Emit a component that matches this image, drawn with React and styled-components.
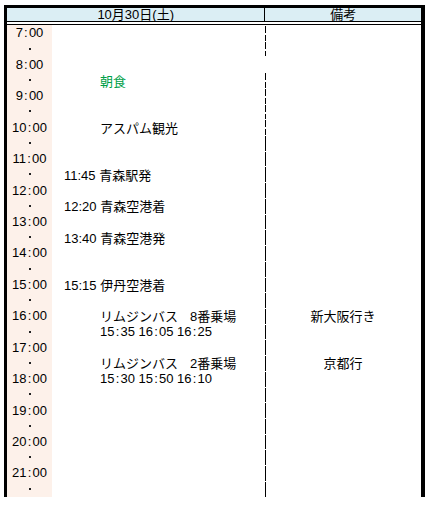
import React from "react";
import styled, { createGlobalStyle } from "styled-components";

const GlobalStyle = createGlobalStyle`
  body {
    margin: 0;
    background: #fff;
    font-family: "Liberation Sans", "Noto Sans CJK JP", sans-serif;
    color: #000;
  }
`;

const Sheet = styled.div`
  margin: 5px 0 0 4px;
  width: 421px;
  box-sizing: border-box;
  border-top: 3px solid #000;
  border-left: 3px solid #000;
  border-right: 4px solid #000;
`;

const HeaderRow = styled.div`
  display: flex;
  height: 13px;
  background: #dbeef4;
  border-bottom: 1px solid #000;
  font-size: 13px;
  line-height: 13px;
`;

const HeaderCell = styled.div`
  width: ${(p) => p.$w}px;
  text-align: center;
  border-left: ${(p) => (p.$divider ? "1px solid #000" : "none")};
  overflow: hidden;
`;

const Body = styled.div`
  margin-top: 2px;
  border-top: 1px solid #000;
`;

const Row = styled.div`
  display: flex;
  height: 15.733px;
  font-size: 13px;
`;

const TimeCell = styled.div`
  width: 45px;
  background: #fdf1ea;
  display: flex;
  align-items: center;
  justify-content: center;
`;

const Dot = styled.span`
  width: 2px;
  height: 2px;
  background: #222;
`;

const Colon = styled.span`
  margin: 0 1.2px;
`;

const EventCell = styled.div`
  width: 213px;
  display: flex;
  align-items: center;
  padding-left: ${(p) => p.$indent}px;
  box-sizing: border-box;
  white-space: nowrap;
  color: ${(p) => p.$color || "#000"};
`;

const BusName = styled.span`
  display: inline-block;
  width: 90px;
`;

const BusTime = styled.span`
  display: inline-block;
  width: 38.5px;
`;

const RemarkCell = styled.div`
  position: relative;
  flex: 1;
  display: flex;
  align-items: center;
  justify-content: center;
  &::before {
    content: "";
    position: absolute;
    left: 0;
    top: 1px;
    bottom: 0;
    width: 1px;
    background: ${(p) =>
      p.$line === "none"
        ? "transparent"
        : p.$line === "dash"
        ? "repeating-linear-gradient(#000 0 7px, transparent 7px 9px)"
        : "#000"};
  }
`;

const Clock = ({ t }) => {
  const [h, m] = t.split(":");
  return (
    <span>
      {h}
      <Colon>:</Colon>
      {m}
    </span>
  );
};

const events = {
  3: { indent: 48, color: "#00a048", text: "朝食" },
  6: { indent: 48, text: "アスパム観光" },
  9: { indent: 12, text: "11:45 青森駅発" },
  11: { indent: 12, text: "12:20 青森空港着" },
  13: { indent: 12, text: "13:40 青森空港発" },
  16: { indent: 12, text: "15:15 伊丹空港着" },
  18: { indent: 48, bus: ["リムジンバス", "8番乗場"] },
  19: { indent: 48, times: ["15:35", "16:05", "16:25"] },
  21: { indent: 48, bus: ["リムジンバス", "2番乗場"] },
  22: { indent: 48, times: ["15:30", "15:50", "16:10"] },
};

const remarks = { 18: "新大阪行き", 21: "京都行" };

const lineFor = (i) => (i === 2 ? "none" : i < 7 ? "dash" : "solid");

export default function App() {
  const rows = Array.from({ length: 30 }, (_, i) => i);
  return (
    <>
      <GlobalStyle />
      <Sheet>
        <HeaderRow>
          <HeaderCell $w={258}>10月30日(土)</HeaderCell>
          <HeaderCell $w={156} $divider>
            備考
          </HeaderCell>
        </HeaderRow>
        <Body>
          {rows.map((i) => {
            const ev = events[i];
            return (
              <Row key={i}>
                <TimeCell>
                  {i % 2 === 0 ? <Clock t={`${7 + i / 2}:00`} /> : <Dot />}
                </TimeCell>
                <EventCell $indent={ev ? ev.indent : 0} $color={ev && ev.color}>
                  {ev && ev.text}
                  {ev && ev.bus && (
                    <>
                      <BusName>{ev.bus[0]}</BusName>
                      {ev.bus[1]}
                    </>
                  )}
                  {ev &&
                    ev.times &&
                    ev.times.map((t) => (
                      <BusTime key={t}>
                        <Clock t={t} />
                      </BusTime>
                    ))}
                </EventCell>
                <RemarkCell $line={lineFor(i)}>{remarks[i]}</RemarkCell>
              </Row>
            );
          })}
        </Body>
      </Sheet>
    </>
  );
}
